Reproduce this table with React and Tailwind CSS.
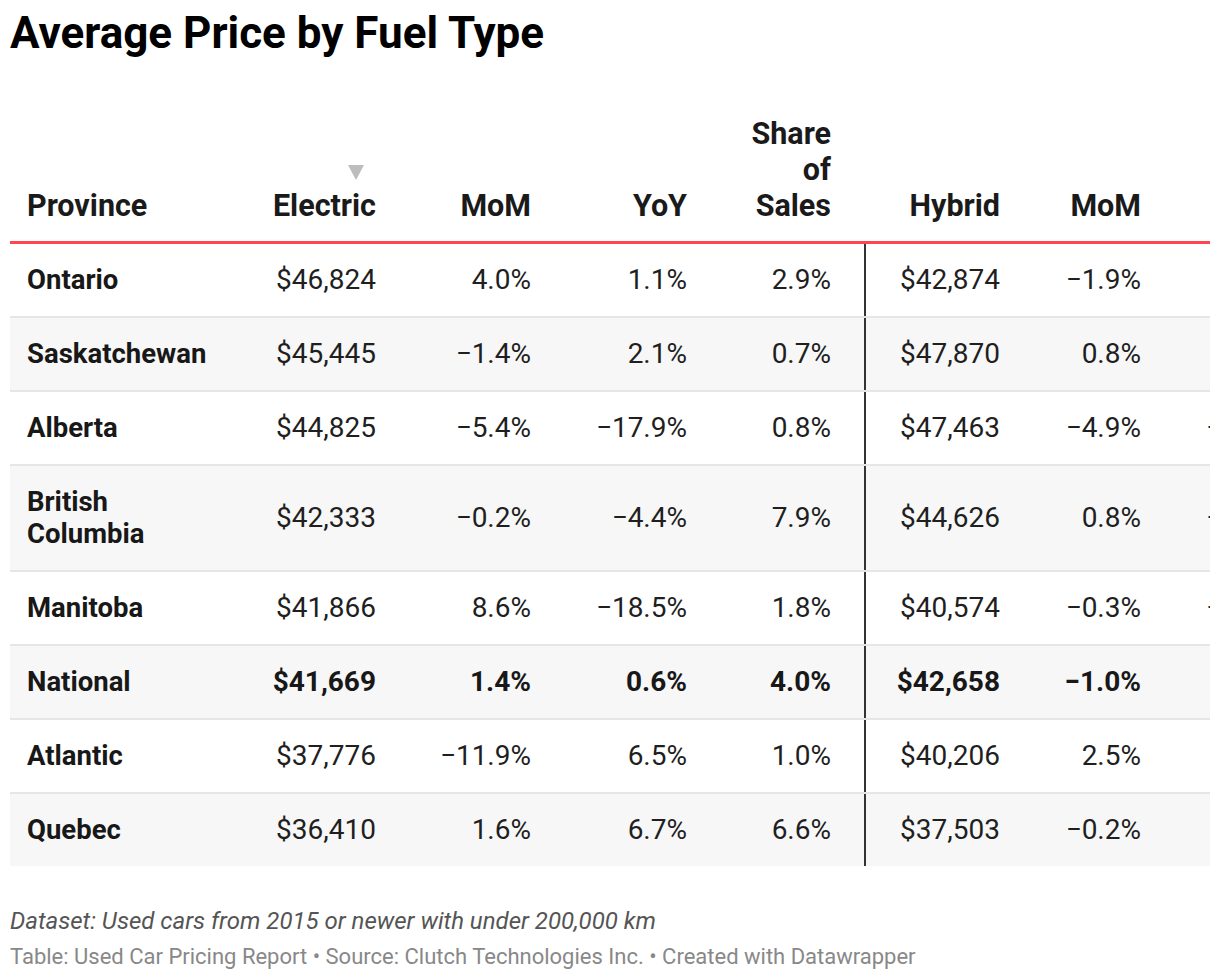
import React from "react";

const COLS = "grid-cols-[226px_140px_155px_156px_179px_134px_141px_156px_150px_150px]";

const rows = [
  ["Ontario", "$46,824", "4.0%", "1.1%", "2.9%", "$42,874", "−1.9%", "3.4%", "5.1%", "$38,112"],
  ["Saskatchewan", "$45,445", "−1.4%", "2.1%", "0.7%", "$47,870", "0.8%", "5.2%", "4.0%", "$39,204"],
  ["Alberta", "$44,825", "−5.4%", "−17.9%", "0.8%", "$47,463", "−4.9%", "−12.1%", "3.8%", "$40,551"],
  ["British Columbia", "$42,333", "−0.2%", "−4.4%", "7.9%", "$44,626", "0.8%", "−10.7%", "9.2%", "$41,030"],
  ["Manitoba", "$41,866", "8.6%", "−18.5%", "1.8%", "$40,574", "−0.3%", "−15.3%", "2.9%", "$37,988"],
  ["National", "$41,669", "1.4%", "0.6%", "4.0%", "$42,658", "−1.0%", "1.1%", "5.6%", "$39,420"],
  ["Atlantic", "$37,776", "−11.9%", "6.5%", "1.0%", "$40,206", "2.5%", "2.0%", "3.1%", "$36,770"],
  ["Quebec", "$36,410", "1.6%", "6.7%", "6.6%", "$37,503", "−0.2%", "−2.3%", "6.0%", "$35,902"],
];

export default function App() {
  return (
    <div className="w-[1220px] h-[980px] bg-white overflow-hidden font-['Roboto',_'Liberation_Sans',_sans-serif]">
      <h1 className="pl-[10px] pt-[7px] text-[44px] leading-[53px] font-bold text-black">
        Average Price by Fuel Type
      </h1>

      <div className="ml-[10px] mt-[46px] w-[1200px] overflow-hidden">
        <div className="w-[1587px]">
          {/* Header */}
          <div className={`grid ${COLS} items-end border-b-[3px] border-[#ff464f] pt-[10px] pb-[17px] text-[30.5px] leading-[36px] font-bold text-[#1a1a1a]`}>
            <div className="pl-[17px] text-left">Province</div>
            <div className="text-right">
              <div className="flex justify-end h-[15px] mb-[8px] pr-[12px]">
                <svg width="16" height="15" viewBox="0 0 16 15">
                  <polygon points="0,0 16,0 8,15" fill="#bdbdbd" />
                </svg>
              </div>
              Electric
            </div>
            <div className="text-right">MoM</div>
            <div className="text-right">YoY</div>
            <div className="text-right pr-[35px]">Share<br />of<br />Sales</div>
            <div className="text-right">Hybrid</div>
            <div className="text-right">MoM</div>
            <div className="text-right">YoY</div>
            <div className="text-right">Share</div>
            <div className="text-right">Gas</div>
          </div>

          {/* Body */}
          {rows.map((r, ri) => {
            const bold = r[0] === "National";
            const last = ri === rows.length - 1;
            return (
              <div
                key={r[0]}
                className={`grid ${COLS} items-stretch text-[28px] leading-[32px] ${ri % 2 === 1 ? "bg-[#f7f7f7]" : "bg-white"} ${last ? "" : "border-b-2 border-[#e6e6e6]"}`}
              >
                {r.map((v, i) => {
                  if (i === 0) {
                    return (
                      <div key={i} className="flex items-center py-[20px] pl-[17px] pr-[8px] font-bold text-[#181818] text-[27.5px]">
                        <div>
                          {v === "British Columbia" ? (
                            <>British<br />Columbia</>
                          ) : (
                            v
                          )}
                        </div>
                      </div>
                    );
                  }
                  const tone = bold ? "font-bold text-[#181818]" : "text-[#1f1f1f]";
                  if (i === 4) {
                    return (
                      <div key={i} className={`flex items-center justify-end py-[20px] pr-[33px] border-r-2 border-[#333333] ${tone}`}>
                        {v}
                      </div>
                    );
                  }
                  return (
                    <div key={i} className={`flex items-center justify-end py-[20px] ${tone}`}>
                      {v}
                    </div>
                  );
                })}
              </div>
            );
          })}
        </div>
      </div>

      <div className="pl-[10px] mt-[41px]">
        <p className="text-[24px] leading-[28px] italic text-[#555555]">
          Dataset: Used cars from 2015 or newer with under 200,000 km
        </p>
        <p className="mt-[8px] text-[22px] leading-[28px] text-[#888888]">
          Table: Used Car Pricing Report • Source: Clutch Technologies Inc. • Created with Datawrapper
        </p>
      </div>
    </div>
  );
}
